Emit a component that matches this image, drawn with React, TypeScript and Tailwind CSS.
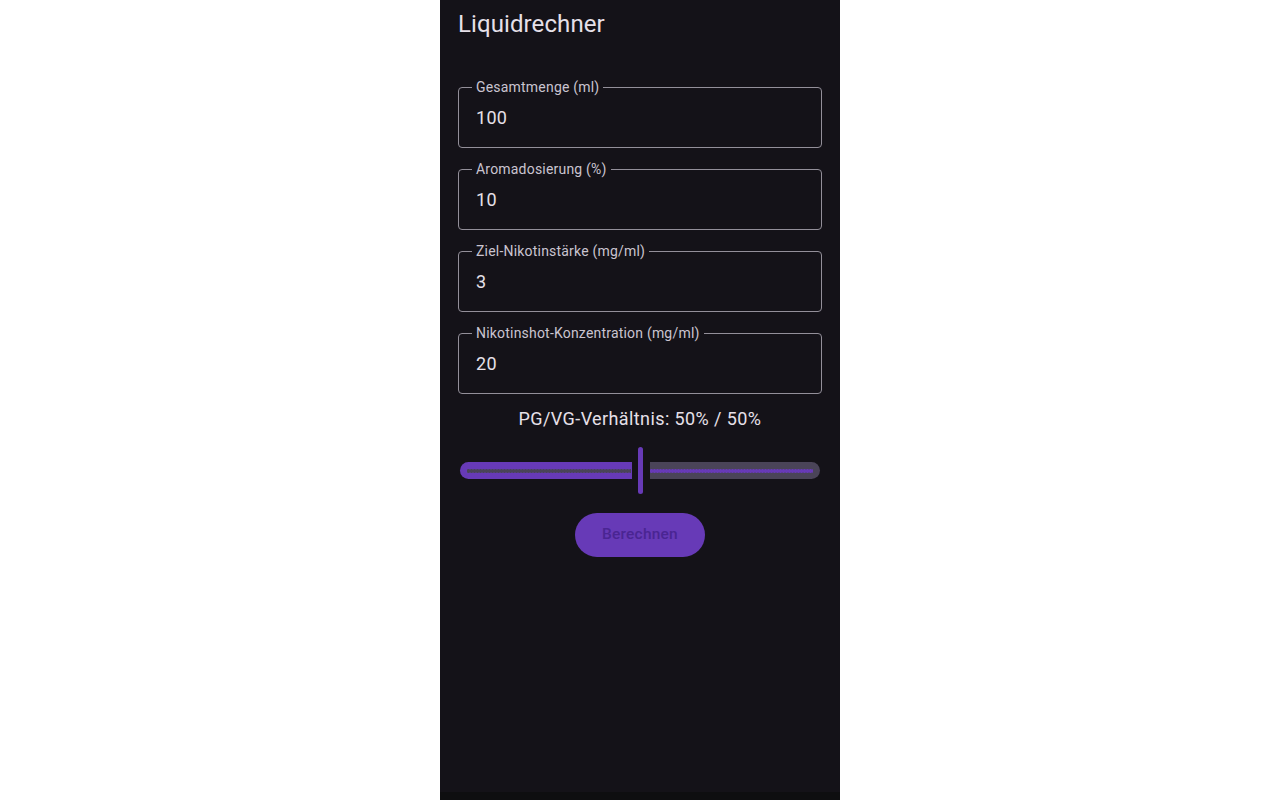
import { useState } from "react";

interface Field {
    label: string;
    value: string;
}

const fields: Field[] = [
    { label: "Gesamtmenge (ml)", value: "100" },
    { label: "Aromadosierung (%)", value: "10" },
    { label: "Ziel-Nikotinstärke (mg/ml)", value: "3" },
    { label: "Nikotinshot-Konzentration (mg/ml)", value: "20" },
];

function OutlinedField({ label, value }: Field) {
    return (
        <div className="relative h-[61px] rounded-[4px] border border-[#938f99] flex items-center px-[17px]">
            <span className="absolute -top-[10px] left-[13px] px-[4px] bg-[#141218] text-[14px] leading-[18px] tracking-[0.2px] text-[#cac4d0]">
                {label}
            </span>
            <span className="text-[18px] text-[#e6e0e9] tracking-[0.3px]">{value}</span>
        </div>
    );
}

export default function App() {
    const [pg] = useState(50);

    return (
        <div className="min-h-[800px] bg-white" style={{ fontFamily: "Roboto, 'Noto Sans', sans-serif" }}>
            <div className="mx-auto w-[400px] h-[800px] bg-[#141218] flex flex-col">
                <div className="flex-1 px-[18px]">
                    {/* Title */}
                    <h1 className="pt-[8px] text-[24px] leading-[32px] tracking-[0.1px] text-[#e6e0e9]">Liquidrechner</h1>

                    {/* Inputs */}
                    <div className="mt-[47px] flex flex-col gap-[21px]">
                        {fields.map((f) => (
                            <OutlinedField key={f.label} label={f.label} value={f.value} />
                        ))}
                    </div>

                    {/* Ratio */}
                    <p className="mt-[13px] text-center text-[18px] leading-[24px] tracking-[0.4px] text-[#e6e0e9]">
                        PG/VG-Verhältnis: {pg}% / {100 - pg}%
                    </p>

                    {/* Slider */}
                    <div className="mt-[16px] h-[47px] flex items-center">
                        <div className="ml-[2px] flex-1 h-[17px] rounded-l-full rounded-r-[3px] bg-[#673ab7] flex items-center pl-[7px] pr-[1px]">
                            <div className="w-full h-[4px] bg-[radial-gradient(circle,#4a4458_1.7px,transparent_2px)] bg-[length:3px_4px]" />
                        </div>
                        <div className="ml-[6px] mr-[7px] w-[5px] h-[47px] rounded-full bg-[#673ab7]" />
                        <div className="mr-[2px] flex-1 h-[17px] rounded-r-full rounded-l-[3px] bg-[#4a4458] flex items-center pr-[7px]">
                            <div className="w-full h-[4px] bg-[radial-gradient(circle,#673ab7_1.7px,transparent_2px)] bg-[length:3px_4px]" />
                        </div>
                    </div>

                    {/* Button */}
                    <div className="mt-[19px] flex justify-center">
                        <button className="w-[130px] h-[44px] rounded-full bg-[#673ab7] text-[15.5px] font-medium tracking-[0.2px] text-[#4a2592]">
                            Berechnen
                        </button>
                    </div>
                </div>
                <div className="h-[8px] bg-[#0e0e10]" />
            </div>
        </div>
    );
}
